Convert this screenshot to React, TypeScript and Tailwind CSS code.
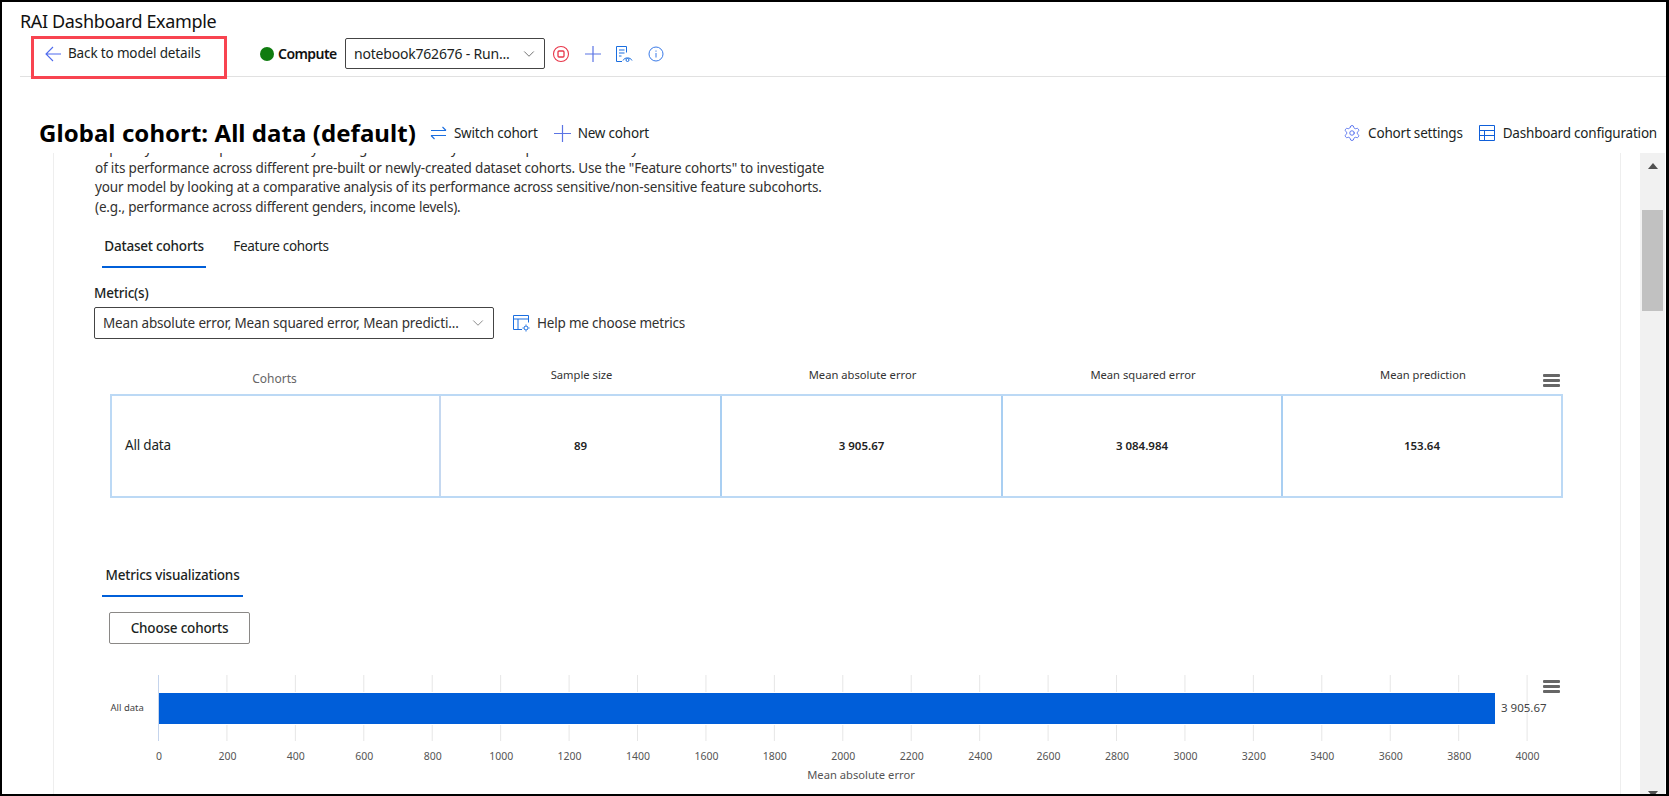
import { ChevronDown, Settings } from 'lucide-react'

const ticks = Array.from({ length: 21 }, (_, i) => i * 200)

function Hamburger({ y }: { y: number }) {
  return (
    <g fill="#666666">
      <rect x={1543} y={y} width={17} height={3} rx={1} />
      <rect x={1543} y={y + 5} width={17} height={3} rx={1} />
      <rect x={1543} y={y + 10} width={17} height={3} rx={1} />
    </g>
  )
}

function ColumnHead({ label }: { label: string }) {
  return <div className="-mt-[2px] text-center text-[11.2px] leading-[16px] text-[#333]">{label}</div>
}

function ValueCell({ value, last }: { value: string; last?: boolean }) {
  return (
    <div className={`flex items-center justify-center text-[11.5px] font-semibold text-[#222] ${last ? '' : 'border-r-2 border-[#a9cff2]'}`}>
      {value}
    </div>
  )
}

export default function App() {
  return (
    <div className="box-border w-[1669px] h-[796px] overflow-hidden flex flex-col bg-white border-t-2 border-l-2 border-b-2 border-r-[3px] border-black text-[#201f1e] font-['Noto_Sans','Open_Sans',sans-serif]">
      {/* header */}
      <div className="relative pt-[7px] pl-[18px]">
        <div className="text-[18px] leading-[24px] text-[#111] tracking-[-0.35px]">RAI Dashboard Example</div>
        <div className="mt-[5px] flex items-center h-[31px] mb-[7px]">
          <div className="flex items-center ml-[25px] w-[215px]">
            <svg width="17" height="16" viewBox="0 0 17 16" fill="none" stroke="#4f6bed" strokeWidth="1.1">
              <path d="M16 8H1M8 1 1 8l7 7" />
            </svg>
            <span className="ml-[6px] text-[13.5px] tracking-[-0.15px]">Back to model details</span>
          </div>
          <span className="w-[14px] h-[14px] rounded-full bg-[#107c10]" />
          <span className="ml-[4px] w-[60px] text-[14px] font-semibold tracking-[-0.55px] text-[#111]">Compute</span>
          <div className="ml-[7px] w-[200px] h-[31px] flex items-center justify-between border border-[#444] rounded-[2px] pl-[8px] pr-[6px] text-[14px] tracking-[-0.2px]">
            <span>notebook762676 - Run...</span>
            <ChevronDown size={18} strokeWidth={1} color="#444" />
          </div>
          <svg className="ml-[7px]" width="18" height="18" viewBox="0 0 18 18" fill="none" stroke="#e8374a">
            <circle cx="9" cy="9" r="7.5" strokeWidth="1.1" />
            <rect x="6" y="6" width="6" height="6" rx="1" strokeWidth="1.3" />
          </svg>
          <svg className="ml-[14px]" width="18" height="18" viewBox="0 0 18 18" fill="none" stroke="#5b74e4" strokeWidth="1.2">
            <path d="M9 1v16M1 9h16" />
          </svg>
          <svg className="ml-[13px]" width="18" height="18" viewBox="0 0 18 18" fill="none" stroke="#1a6ee0" strokeWidth="1">
            <path d="M7 16.500H1.500v-15h10v6M4 5h5.500M4 8h5.500M4 11h2.500" />
            <path d="M8 15.500c1.500-3.500 7.500-3.500 9 0" />
            <circle cx="12.500" cy="15" r="1.500" />
          </svg>
          <svg className="ml-[15px]" width="16" height="16" viewBox="0 0 16 16" fill="none" stroke="#3b7be8" strokeWidth="1">
            <circle cx="8" cy="8" r="7" />
            <path d="M8 7v4.500M8 4.500v1.200" />
          </svg>
        </div>
        <div className="border-b border-[#e1e1e1]" />
        {/* highlight drawn over the screenshot */}
        <div className="absolute left-[29px] top-[34px] w-[196px] h-[43px] border-[3px] border-[#f84450]" />
      </div>

      {/* cohort bar */}
      <div className="mt-[38px] mb-[2px] h-[36px] flex items-center pl-[37px] pr-[9px]">
        <h1 className="text-[24px] font-bold text-black tracking-[0.06px]">Global cohort: All data (default)</h1>
        <svg className="ml-[14px]" width="17" height="14" viewBox="0 0 17 14" fill="none" stroke="#1a6ee0" strokeWidth="1.1">
          <path d="M1 4.500h15M12.500 1 16 4.500M16 9.500H1M4.500 13 1 9.500" />
        </svg>
        <span className="ml-[7px] text-[13.500px] tracking-[-0.2px]">Switch cohort</span>
        <svg className="ml-[16px]" width="17" height="17" viewBox="0 0 17 17" fill="none" stroke="#5b74e4" strokeWidth="1.2">
          <path d="M8.500 0v17M0 8.500h17" />
        </svg>
        <span className="ml-[7px] text-[13.500px] tracking-[-0.2px]">New cohort</span>
        <div className="ml-auto flex items-center">
          <Settings size={18} strokeWidth={1.2} color="#4f6bed" />
          <span className="ml-[7px] text-[13.500px] tracking-[-0.2px]">Cohort settings</span>
          <svg className="ml-[16px]" width="16" height="16" viewBox="0 0 16 16" fill="none" stroke="#0f5fd9" strokeWidth="1">
            <path d="M.5.5h15v15H.5zM.5 5.500h15M.5 10.500h15M5.500 5.500v10" />
          </svg>
          <span className="ml-[8px] text-[13.500px] tracking-[-0.2px]">Dashboard configuration</span>
        </div>
      </div>

      {/* scrolling content */}
      <div className="flex-1 min-h-0 flex overflow-hidden">
        <div className="flex-1 pl-[51px] pr-[19px] min-w-0">
          <div className="h-[900px] border-l border-r border-[#eeeeee] pl-[40px] -mt-[1px]">
            <div className="-mt-[14px] ml-[1px] w-[745px] text-[13.500px] leading-[19.5px] tracking-[-0.16px] text-[#323130]">
              <p className="whitespace-nowrap">Explore your model performance by looking at its accuracy and a comparative summary</p>
              <p className="whitespace-nowrap">of its performance across different pre-built or newly-created dataset cohorts. Use the "Feature cohorts" to investigate</p>
              <p className="whitespace-nowrap">your model by looking at a comparative analysis of its performance across sensitive/non-sensitive feature subcohorts.</p>
              <p className="whitespace-nowrap">(e.g., performance across different genders, income levels).</p>
            </div>

            <div className="mt-[19px] ml-[8px] flex text-[13.500px] leading-[20px] tracking-[-0.2px] whitespace-nowrap">
              <div className="w-[104px] text-center pb-[10px] border-b-2 border-[#005fd9] font-medium">Dataset cohorts</div>
              <div className="ml-[27px] w-[96px] text-center tracking-[-0.3px]">Feature cohorts</div>
            </div>

            <div className="mt-[15px] text-[13.500px] leading-[20px] font-medium tracking-[-0.2px]">Metric(s)</div>
            <div className="mt-[4px] flex items-center">
              <div className="w-[400px] h-[32px] flex items-center justify-between border border-[#444] rounded-[2px] pl-[8px] pr-[6px] text-[13.500px] tracking-[-0.16px] text-[#323130]">
                <span>Mean absolute error, Mean squared error, Mean predicti...</span>
                <ChevronDown size={18} strokeWidth={1} color="#666" />
              </div>
              <svg className="ml-[19px]" width="17" height="17" viewBox="0 0 17 17" fill="none" stroke="#1a6ee0" strokeWidth="1">
                <path d="M9 14.500H.5V.5h15v7M.5 4h15M5 4v10.500" />
                <circle cx="13" cy="13" r="2" />
                <path d="M13 9.500v1M13 15.500v1M9.500 13h1M15.500 13h1" />
              </svg>
              <span className="ml-[7px] text-[13.500px] tracking-[-0.2px] text-[#323130]">Help me choose metrics</span>
            </div>

            {/* metrics table */}
            <div className="mt-[30px] ml-[16px] w-[1453px] relative">
              <div className="grid grid-cols-[331px_281px_281px_280px_1fr] h-[25px]">
                <div className="text-center text-[12px] leading-[16px] pt-[2px] text-[#666] pr-[2px]">Cohorts</div>
                <ColumnHead label="Sample size" />
                <ColumnHead label="Mean absolute error" />
                <ColumnHead label="Mean squared error" />
                <ColumnHead label="Mean prediction" />
              </div>
              <svg className="absolute left-[1433px] top-[5px]" width="18" height="14" viewBox="1543 374 18 14">
                <Hamburger y={374} />
              </svg>
              <div className="grid grid-cols-[329px_281px_281px_280px_1fr] h-[104px] border-2 border-[#bcd9f5]">
                <div className="flex items-center pl-[13px] pb-[2px] text-[13.500px] tracking-[-0.2px] border-r-2 border-[#c5d8f0]">All data</div>
                <ValueCell value="89" />
                <ValueCell value="3 905.67" />
                <ValueCell value="3 084.984" />
                <ValueCell value="153.64" last />
              </div>
            </div>

            <div className="mt-[67px] ml-[8px] w-[141px] text-center pb-[10px] border-b-2 border-[#005fd9] text-[13.500px] leading-[20px] font-medium tracking-[-0.2px]">
              Metrics visualizations
            </div>
            <button className="block mt-[15px] ml-[15px] w-[141px] h-[32px] border border-[#8a8886] rounded-[2px] text-[13.500px] font-medium tracking-[-0.2px]">
              Choose cohorts
            </button>

            {/* bar chart */}
            <svg className="mt-[16px] block" width="1526" height="134" viewBox="94 660 1526 134" fontFamily="'Noto Sans', sans-serif">
              {ticks.map((t, i) => {
                const x = 158.5 + i * 68.43
                return (
                  <g key={t}>
                    <line x1={x} x2={x} y1={675} y2={741} stroke={i === 0 ? '#c5d4ec' : '#e6e6e6'} />
                    <text x={x + 0.5} y={760} fontSize="10.5" fill="#555" textAnchor="middle">{t}</text>
                  </g>
                )
              })}
              <rect x={159} y={692} width={1337} height={33} fill="#fff" />
              <rect x={159} y={693} width={1336} height={31} fill="#005ed9" />
              <text x={110.5} y={711} fontSize="9.500" fill="#444">All data</text>
              <text x={1501} y={712} fontSize="11.500" fill="#444">3 905.67</text>
              <text x={861} y={779} fontSize="11.200" fill="#555" textAnchor="middle">Mean absolute error</text>
              <Hamburger y={680} />
            </svg>
          </div>
        </div>

        {/* scrollbar */}
        <div className="relative w-[25px] shrink-0 mr-[1px] bg-[#f1f1f1] flex flex-col items-center">
          <span className="mt-[10px] w-0 h-0 border-l-[5px] border-r-[5px] border-b-[6px] border-l-transparent border-r-transparent border-b-[#505050]" />
          <div className="mt-[41px] w-[21px] h-[101px] bg-[#c1c1c1]" />
          <span className="mt-auto -mb-[3px] w-0 h-0 border-l-[5px] border-r-[5px] border-t-[6px] border-l-transparent border-r-transparent border-t-[#505050]" />
        </div>
      </div>
    </div>
  )
}
